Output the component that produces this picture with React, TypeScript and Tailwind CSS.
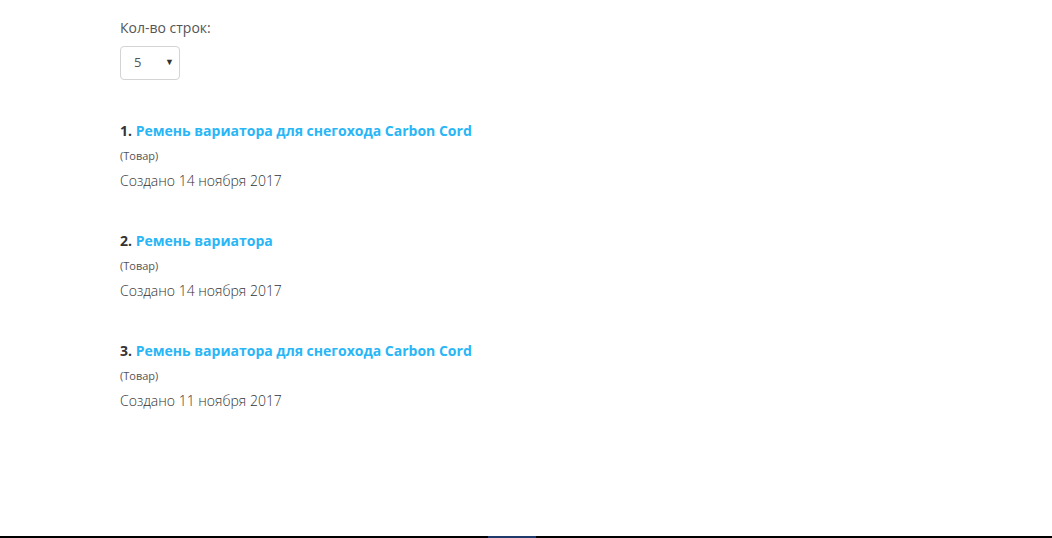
import { useState } from 'react';

const items = [
  { title: 'Ремень вариатора для снегохода Carbon Cord', date: '14 ноября 2017' },
  { title: 'Ремень вариатора', date: '14 ноября 2017' },
  { title: 'Ремень вариатора для снегохода Carbon Cord', date: '11 ноября 2017' },
];

export default function App() {
  const [rows, setRows] = useState('5');

  return (
    <div className="h-[538px] flex flex-col bg-white text-[#555] font-['Open_Sans',sans-serif]">
      <div className="flex-1 pl-[120px] pt-[18px]">
        <div className="text-[14px] leading-[20px]">Кол-во строк:</div>
        <div className="relative mt-[8px] w-[60px] h-[34px]">
          <select
            value={rows}
            onChange={e => setRows(e.target.value)}
            className="appearance-none w-full h-full border border-[#d4d4d4] rounded-[4px] bg-white pl-[13px] text-[13px] text-[#555] outline-none"
          >
            <option value="5">5</option>
            <option value="10">10</option>
            <option value="20">20</option>
          </select>
          <span className="pointer-events-none absolute right-[6px] top-[9px] text-[9px] text-[#333]">▼</span>
        </div>

        <div className="mt-[40px] flex flex-col gap-[38px]">
          {items.map((item, i) => (
            <div key={i}>
              <div className="text-[14px] leading-[22px] font-bold">
                <span className="text-[#333]">{i + 1}. </span>
                <a href="#" className="text-[#29b6f6]">{item.title}</a>
              </div>
              <div className="mt-[6px] text-[11px] leading-[16px] text-[#555]">(Товар)</div>
              <div className="mt-[6px] text-[14px] leading-[22px] font-light text-[#333]">Создано {item.date}</div>
            </div>
          ))}
        </div>
      </div>
      <div className="h-[2px] bg-black flex">
        <div className="ml-[488px] w-[48px] bg-[#1f3a6a]" />
      </div>
    </div>
  );
}
